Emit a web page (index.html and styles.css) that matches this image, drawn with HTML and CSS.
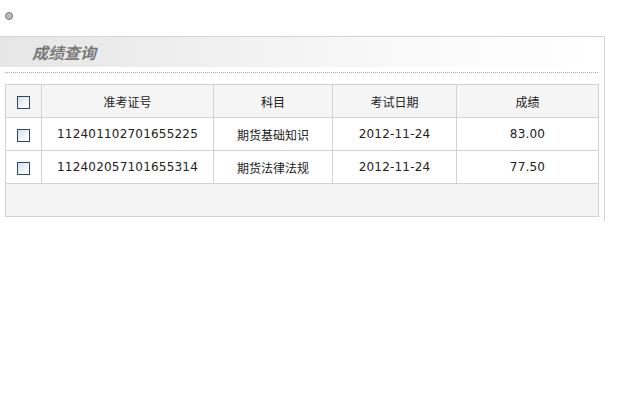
FILE: index.html
```html
<!DOCTYPE html>
<html>
<head>
    <title>成绩查询</title>
    <link rel="stylesheet" href="styles.css">
</head>
<body>
    <div class="dot-row"><span class="dot"></span></div>

    <div class="panel">
        <div class="panel-title">成绩查询</div>
        <div class="dots"></div>

        <table class="grid">
            <tr class="head">
                <td class="col-check"><span class="check"></span></td>
                <td class="col-no">准考证号</td>
                <td class="col-subject">科目</td>
                <td class="col-date">考试日期</td>
                <td class="col-score">成绩</td>
            </tr>
            <tr>
                <td><span class="check"></span></td>
                <td class="num">112401102701655225</td>
                <td>期货基础知识</td>
                <td class="num">2012-11-24</td>
                <td class="num">83.00</td>
            </tr>
            <tr>
                <td><span class="check"></span></td>
                <td class="num">112402057101655314</td>
                <td>期货法律法规</td>
                <td class="num">2012-11-24</td>
                <td class="num">77.50</td>
            </tr>
            <tr class="foot">
                <td colspan="5"></td>
            </tr>
        </table>
    </div>
</body>
</html>
```

FILE: styles.css
```css
body {
    margin: 0;
    background-color: white;
    font-family: "Noto Sans CJK SC", sans-serif;
    font-size: 12px;
    color: #222;
}

.dot-row {
    height: 36px;
    padding-left: 5px;
    box-sizing: border-box;
    padding-top: 12px;
}

.dot {
    display: block;
    width: 6px;
    height: 6px;
    border: 1px solid #777;
    border-radius: 50%;
    background-color: #bbb;
}

.panel {
    width: 605px;
    height: 186px;
    border-top: 1px solid #d4d4d4;
    border-right: 1px solid #d4d4d4;
    box-sizing: border-box;
}

.panel-title {
    height: 30px;
    line-height: 30px;
    padding-left: 32px;
    background: linear-gradient(to right, #e6e6e6, #fafafa 70%, #fff);
    font-size: 16px;
    font-weight: bold;
    font-style: italic;
    color: #7a7a7a;
}

.dots {
    margin: 5px 6px 0 5px;
    border-top: 1px dotted #aaa;
}

.grid {
    margin: 11px 0 0 5px;
    width: 594px;
    border-collapse: collapse;
    table-layout: fixed;
}

.grid td {
    height: 32px;
    padding: 0;
    border: 1px solid #d2d2d2;
    text-align: center;
    vertical-align: middle;
}

.grid .head td {
    background-color: #f5f5f5;
}

.grid .foot td {
    background-color: #f4f4f4;
}

.col-check { width: 35px; }
.col-no { width: 171px; }
.col-subject { width: 118px; }
.col-date { width: 123px; }

.num {
    font-family: "DejaVu Sans", Verdana, sans-serif;
    letter-spacing: 0.2px;
    padding-top: 3px;
}

.check {
    display: block;
    width: 11px;
    height: 11px;
    margin: 2px auto 0;
    border: 1px solid #2b4a6e;
    background: linear-gradient(135deg, #d6dde5, #f4f6f8 60%, #fff);
}
```
